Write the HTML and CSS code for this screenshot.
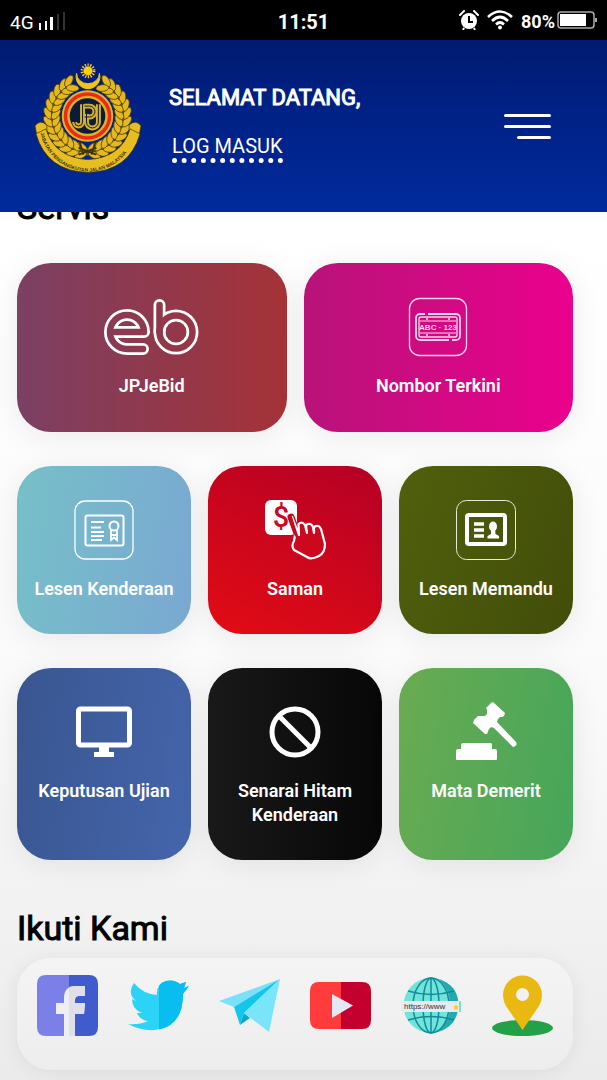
FILE: index.html
```
<!DOCTYPE html>
<html lang="ms">

<head>
    <meta charset="UTF-8">
    <meta name="viewport" content="width=device-width, initial-scale=1.0">
    <title>MyJPJ</title>
    <link rel="stylesheet" href="styles.css">
</head>

<body>
    <div class="status-bar">
        <div class="status-left">
            <span class="network">4G</span>
            <svg width="28" height="20" viewBox="0 0 28 20">
                <g fill="#fff">
                    <rect x="1" y="13" width="2" height="7" />
                    <rect x="7" y="11" width="2" height="9" />
                    <rect x="12" y="7" width="3" height="13" />
                </g>
                <g fill="#333">
                    <rect x="19" y="4" width="2" height="16" />
                    <rect x="25" y="2" width="2" height="18" />
                </g>
            </svg>
        </div>
        <div class="clock">11:51</div>
        <div class="status-right">
            <svg width="20" height="20" viewBox="0 0 20 20">
                <circle cx="10" cy="11" r="8" fill="#fff" />
                <path d="M1 5L5 1M19 5L15 1" stroke="#fff" stroke-width="2" stroke-linecap="round" />
                <path d="M10 6V12H14" fill="none" stroke="#000" stroke-width="2" />
                <path d="M5 18L4 20M15 18L16 20" stroke="#fff" stroke-width="2" />
            </svg>
            <svg width="26" height="20" viewBox="0 0 26 20">
                <g fill="none" stroke="#fff" stroke-width="2.6">
                    <path d="M1 7Q13 -4 25 7" />
                    <path d="M5 11Q13 3 21 11" />
                    <path d="M9 14.500Q13 10.500 17 14.500" />
                </g>
                <circle cx="13" cy="17.500" r="2" fill="#fff" />
            </svg>
            <span class="percent">80%</span>
            <svg class="battery" width="40" height="20" viewBox="0 0 40 20">
                <rect x="1" y="2" width="36" height="16" rx="3" fill="none" stroke="#aaa" stroke-width="1.500" />
                <rect x="3" y="4" width="26" height="12" fill="#fff" />
                <path d="M39 8V12" stroke="#aaa" stroke-width="2" />
            </svg>
        </div>
    </div>

    <header>
        <svg class="logo" viewBox="8 6 109 112" role="img" aria-label="JPJ">
            <defs>
                <g id="grain">
                    <ellipse cx="62" cy="20" rx="3.400" ry="6.500" transform="rotate(58 62 20)" />
                    <ellipse cx="62" cy="28" rx="3.400" ry="6.500" transform="rotate(122 62 28)" />
                </g>
                <g id="wreath">
                    <use href="#grain" transform="rotate(-170 62 60)" />
                    <use href="#grain" transform="rotate(-158 62 60)" />
                    <use href="#grain" transform="rotate(-146 62 60)" />
                    <use href="#grain" transform="rotate(-134 62 60)" />
                    <use href="#grain" transform="rotate(-122 62 60)" />
                    <use href="#grain" transform="rotate(-110 62 60)" />
                    <use href="#grain" transform="rotate(-98 62 60)" />
                    <use href="#grain" transform="rotate(-86 62 60)" />
                    <use href="#grain" transform="rotate(-74 62 60)" />
                    <use href="#grain" transform="rotate(-62 62 60)" />
                    <use href="#grain" transform="rotate(-50 62 60)" />
                    <use href="#grain" transform="rotate(-38 62 60)" />
                    <use href="#grain" transform="rotate(-28 62 60)" />
                </g>
                <path id="ribbonText" d="M14.500 77A49 49 0 0 0 110.500 77" />
            </defs>
            <path d="M51 17A12 12 0 1 0 74 17A10.500 9.500 0 1 1 51 17Z" fill="#f3c513" stroke="#f3c513" />
            <circle cx="62.500" cy="14.500" r="4.500" fill="#ffcf10" />
            <circle cx="62.500" cy="14.500" r="6" fill="none" stroke="#ffcf10" stroke-width="3" stroke-dasharray="1.300 1.400" />
            <path d="M46 28A36 36 0 1 0 79 28" fill="none" stroke="#6d5a14" stroke-width="8" />
            <g fill="#e6b820" stroke="#4d410c" stroke-width="0.800">
                <use href="#wreath" />
                <use href="#wreath" transform="translate(124 0) scale(-1 1)" />
            </g>
            <path d="M54 86L58 99M70 86L66 99M53 99L71 92M53 92L71 99" stroke="#3b3408" stroke-width="2" />
            <g fill="#e8bd22" stroke="#3b3408" stroke-width="0.700">
                <path d="M9 70Q14 63 21 69L21 80L11 80Z" />
                <path d="M116 70Q111 63 104 69L104 80L114 80Z" />
                <path d="M10 78L20 73Q29 102 62.500 104Q96 102 105 73L115 78Q104 116 62.500 117Q21 116 10 78Z" />
            </g>
            <text class="ribbon-text"><textPath href="#ribbonText">JABATAN PENGANGKUTAN JALAN MALAYSIA</textPath></text>
            <circle cx="62" cy="60" r="26" fill="#dfb62a" />
            <circle cx="62" cy="60" r="22" fill="none" stroke="#ed2a17" stroke-width="4" />
            <circle cx="62" cy="60" r="20" fill="none" stroke="#e8a81d" stroke-width="1" />
            <circle cx="62" cy="60" r="18" fill="#0b1c38" />
            <g fill="none" stroke="#d9b02b" stroke-width="5">
                <path d="M57 48V66A4 4 0 0 1 49 66" />
                <path d="M59 50H64A5 5 0 0 1 64 61H59" />
                <path d="M61 58V66A6 6 0 0 0 73 66V48" />
            </g>
            <g fill="none" stroke="#0b1c38" stroke-width="1">
                <path d="M57 48V66A4 4 0 0 1 49 66" />
                <path d="M59 50H64A5 5 0 0 1 64 61H59" />
                <path d="M61 58V66A6 6 0 0 0 73 66V48" />
            </g>
        </svg>
        <div class="welcome">
            <p>SELAMAT DATANG,</p>
            <a href="#">LOG MASUK</a>
        </div>
        <button class="menu-button" aria-label="Menu">
            <span></span>
            <span></span>
            <span></span>
        </button>
    </header>

    <main>
        <h2>Servis</h2>
        <div class="services">
            <a href="#" class="card wide ebid">
                <svg class="icon-eb" viewBox="105 298 94 60">
                    <mask id="ebMask" maskUnits="userSpaceOnUse" x="100" y="290" width="110" height="70">
                        <g fill="none" stroke-linecap="round">
                            <g stroke="#fff" stroke-width="12">
                                <path d="M117 333H144A17 17 0 1 0 127 350H143" stroke-linejoin="round" />
                                <path d="M159.500 306V333" />
                                <circle cx="176" cy="333" r="16.500" />
                            </g>
                            <g stroke="#000" stroke-width="6.500">
                                <path d="M115 333H144A17 17 0 1 0 127 350H143" stroke-linejoin="round" />
                                <path d="M159.500 306V333" />
                                <circle cx="176" cy="333" r="16.500" />
                            </g>
                        </g>
                    </mask>
                    <rect x="100" y="290" width="110" height="70" fill="#fff" mask="url(#ebMask)" />
                </svg>
                <span>JPJeBid</span>
            </a>
            <a href="#" class="card wide nombor">
                <svg viewBox="0 0 60 60">
                    <g fill="none" stroke="#fbd3ec">
                        <rect x="1.500" y="1.500" width="57" height="57" rx="10" stroke-width="1.300" />
                        <rect x="8" y="17" width="44" height="26" rx="4" stroke-width="1.800" />
                        <rect x="11" y="20" width="38" height="20" rx="2" stroke-width="1.300" />
                        <path d="M12 24H48M12 36H48" stroke-width="1" />
                    </g>
                    <path d="M17 17H20M41 43H44" stroke="#d30a86" stroke-width="2" />
                    <g fill="#fbd3ec">
                        <circle cx="19" cy="22" r="1" />
                        <circle cx="41" cy="22" r="1" />
                        <circle cx="19" cy="38" r="1" />
                        <circle cx="41" cy="38" r="1" />
                    </g>
                    <text class="plate-text" x="30" y="33">ABC · 123</text>
                </svg>
                <span>Nombor Terkini</span>
            </a>
            <a href="#" class="card kenderaan">
                <svg viewBox="0 0 60 60" fill="none" stroke="#fff">
                    <rect x="1" y="1" width="58" height="58" rx="10" stroke-width="1.300" />
                    <rect x="11.500" y="15.500" width="38" height="30" rx="2" stroke-width="2" />
                    <path d="M17 22H30M17 27.500H27M17 32H30M17 36H30M17 40H28" stroke-width="1.800" />
                    <circle cx="40" cy="26" r="4.500" stroke-width="2" />
                    <path d="M37 30V40L40 37.500L43 40V30M37 35H43" stroke-width="1.800" />
                </svg>
                <span>Lesen Kenderaan</span>
            </a>
            <a href="#" class="card saman">
                <svg viewBox="0 0 60 60">
                    <rect x="0" y="0" width="32" height="35" rx="6" fill="#fff" />
                    <text class="dollar" x="16" y="27">$</text>
                    <path d="M26 17L33 36" stroke="#c50a1e" stroke-width="7" stroke-linecap="round" />
                    <path d="M26 17L35 35L34 24Q37 21 40 25L42 33L41 25Q46 22 48 27L49 33L49 27Q54 24 56 29L60 44Q60 53 54 56Q46 60 42 57L29 50Q26 46 29 41L30 35Z" fill="#cb081d" />
                    <path d="M27 17L34 35L33.500 24Q37 21 40 25L42 33L41 25Q46 22 48 27L49 33L49 27Q54 24 56 29L60 44Q60 53 54 56Q46 60 42 57L29 50Q26 46 29 41L30 35" fill="none" stroke="#fff" stroke-width="2.200" stroke-linejoin="round" stroke-linecap="round" />
                    <path d="M25.500 17L31 35" stroke="#c50a1e" stroke-width="3" stroke-linecap="round" />
                </svg>
                <span>Saman</span>
            </a>
            <a href="#" class="card memandu">
                <svg viewBox="0 0 60 60">
                    <rect x="0.500" y="0.500" width="59" height="59" rx="10" fill="none" stroke="#e9ecd8" />
                    <rect x="11" y="15" width="38" height="29" rx="2" fill="none" stroke="#fff" stroke-width="4" />
                    <path d="M18 24H28M18 30H28M18 36H28" stroke="#fff" stroke-width="3.500" />
                    <ellipse cx="37" cy="26.500" rx="4" ry="5" fill="#fff" />
                    <path d="M35 28H39L39.500 34L43 36V38.500H31.500V36L35 34Z" fill="#fff" />
                </svg>
                <span>Lesen Memandu</span>
            </a>
            <a href="#" class="card keputusan">
                <svg viewBox="0 0 60 60">
                    <rect x="4.500" y="7" width="51" height="36" rx="2" fill="none" stroke="#fff" stroke-width="5" />
                    <path d="M25 44H35V50H40V55H20V50H25Z" fill="#fff" />
                </svg>
                <span>Keputusan Ujian</span>
            </a>
            <a href="#" class="card senarai">
                <svg viewBox="0 0 60 60" fill="none" stroke="#fff" stroke-width="5">
                    <circle cx="30" cy="30" r="23" />
                    <path d="M14 14L46 46" />
                </svg>
                <span>Senarai Hitam Kenderaan</span>
            </a>
            <a href="#" class="card demerit">
                <svg viewBox="0 0 60 60" fill="#fff">
                    <path d="M0 49Q0 47 2 47H5V43Q5 41 7 41H35Q36 41 36 43V47H39Q41 47 41 49V57Q41 58 40 58H1Q0 58 0 57Z" />
                    <path d="M35 1L37 0L49 11L48 14L46 15L44 15L42 17L41 20L60 40Q62 44 57 45L38 26L35 25L33 27L31 32L29 32L17 21L18 18L22 14L29 14L31 12L31 8L30 6Z" />
                </svg>
                <span>Mata Demerit</span>
            </a>
        </div>

        <h2>Ikuti Kami</h2>
        <div class="social">
            <a href="#" aria-label="Facebook">
                <svg viewBox="0 0 61 61">
                    <path d="M32 0H9Q0 0 0 9V52Q0 61 9 61H32Z" fill="#7a80e8" />
                    <path d="M32 0H52Q61 0 61 9V52Q61 61 52 61H32Z" fill="#405bcb" />
                    <path d="M27 61V39H19V28H27V23Q27 11 39 11H48V21H42Q38 21 38 25V28H48L47 39H38V61Z" fill="#efeff3" />
                    <path d="M32 12Q36 11 39 11H48V21H42Q38 21 38 25V28H48L47 39H38V61H32Z" fill="#dedfe8" />
                </svg>
            </a>
            <a href="#" aria-label="Twitter">
                <svg viewBox="0 0 61 61">
                    <defs>
                        <path id="bird" d="M61 11L56 13L58 7L52 9Q46 4 38 6Q28 9 29 20Q15 19 6 8Q0 16 5 23L8 26L4 24Q4 34 14 38H9Q12 45 20 46Q11 50 0 49Q13 56 27 55Q55 52 55 19Z" />
                        <clipPath id="birdHalf">
                            <rect x="31" y="0" width="31" height="61" />
                        </clipPath>
                    </defs>
                    <use href="#bird" fill="#2bd3f7" />
                    <use href="#bird" fill="#08bdf0" clip-path="url(#birdHalf)" />
                </svg>
            </a>
            <a href="#" aria-label="Telegram">
                <svg viewBox="0 0 61 61">
                    <path d="M0 26L61 4L15 32Z" fill="#78e2f8" />
                    <path d="M15 32L61 4L25 38L21 50Z" fill="#14c6eb" />
                    <path d="M21 50L25 38L31 43Z" fill="#08a8cf" />
                    <path d="M25 38L61 4L50 57Z" fill="#7ae4f9" />
                </svg>
            </a>
            <a href="#" aria-label="YouTube">
                <svg viewBox="0 0 61 61">
                    <path d="M31 7H9Q0 7 0 16V45Q0 54 9 54H31Z" fill="#ff3b3b" />
                    <path d="M31 7H52Q61 7 61 16V45Q61 54 52 54H31Z" fill="#c4002f" />
                    <path d="M22 19L43 30.500L22 43Z" fill="#e3e8f2" />
                </svg>
            </a>
            <a href="#" aria-label="Laman web">
                <svg viewBox="0 0 61 61">
                    <circle cx="30" cy="30.500" r="27.500" fill="#71e3da" />
                    <path d="M38 4Q58 11 57.500 31Q56 52 36 57Q50 45 49 30Q49 14 38 4Z" fill="#22aab0" />
                    <g fill="none" stroke="#118b98" stroke-width="1.500">
                        <path d="M30 3V58" />
                        <ellipse cx="30" cy="30.500" rx="8" ry="27.500" />
                        <ellipse cx="30" cy="30.500" rx="18" ry="27.500" />
                        <path d="M7 16Q30 23 53 16M7 45Q30 38 53 45" />
                    </g>
                    <rect x="0" y="26" width="59" height="11" rx="1" fill="#e5ebee" />
                    <rect x="58" y="26" width="2" height="11" fill="#71e3da" />
                    <text class="web-text" x="3" y="34">https://www</text>
                    <path d="M55 29L56 31H58L56.500 32.500L57 35L55 34L53 35L53.500 32.500L52 31H54Z" fill="#ffc93c" />
                </svg>
            </a>
            <a href="#" aria-label="Lokasi">
                <svg viewBox="0 0 61 61">
                    <ellipse cx="30.500" cy="53" rx="30.500" ry="8" fill="#24a047" />
                    <path fill-rule="evenodd" d="M30.500 55L14 31Q11 26 11 20A19 19 0 0 1 50 20Q50 26 47 31ZM30.500 13A6.500 6.500 0 1 0 30.500 26A6.500 6.500 0 1 0 30.500 13Z" fill="#e9b911" />
                </svg>
            </a>
        </div>
    </main>
</body>

</html>
```
FILE: styles.css
```
* {
    box-sizing: border-box;
}

body {
    margin: 0;
    min-height: 100vh;
    font-family: Roboto, sans-serif;
    color: #000;
    background: linear-gradient(#fff 20%, #fafafa 65%, #ebebeb);
}

a {
    color: #fff;
    text-decoration: none;
}

/* Status bar */
.status-bar {
    display: grid;
    grid-template-columns: 1fr auto 1fr;
    align-items: center;
    height: 40px;
    padding: 0 10px;
    background: #000;
    color: #fff;
    font-size: 20px;
}

.status-left,
.status-right {
    display: flex;
    align-items: center;
    gap: 4px;
}

.status-right {
    justify-content: flex-end;
    gap: 8px;
}

.network {
    font-size: 19px;
    padding-top: 4px;
}

.clock,
.percent {
    font-weight: 700;
    padding-top: 3px;
}

.percent {
    font-size: 18px;
}

.battery {
    margin-left: -6px;
}

/* Header */
header {
    position: relative;
    z-index: 1;
    display: flex;
    align-items: center;
    height: 172px;
    padding: 0 56px 0 34px;
    background: linear-gradient(#001b70, #002185 40%, #002a9c);
    color: #fff;
}

.logo {
    width: 108px;
    height: 112px;
    margin-bottom: 16px;
}

.ribbon-text {
    font: 700 5px "Liberation Sans", sans-serif;
    fill: #3b3408;
}

.welcome {
    flex: 1;
    margin: 0 0 6px 27px;
}

.welcome p {
    margin: 0 0 22px;
    font-size: 22px;
    line-height: 28px;
    -webkit-text-stroke: 1px #fff;
}

.welcome a {
    display: inline-block;
    margin-left: 3px;
    font-size: 20px;
    line-height: 24px;
    border-bottom: 5px dotted #fff;
}

.menu-button {
    display: flex;
    flex-direction: column;
    align-items: flex-end;
    gap: 8px;
    padding: 0;
    border: none;
    background: none;
    cursor: pointer;
}

.menu-button span {
    width: 47px;
    height: 3px;
    border-radius: 2px;
    background: #fff;
}

.menu-button span:last-child {
    width: 34px;
}

main {
    margin-top: -25px;
    padding: 0 34px 8px 17px;
}

h2 {
    margin: 0;
    font-size: 34px;
    font-weight: 400;
    line-height: 40px;
    -webkit-text-stroke: 1px #000;
}

.services {
    display: grid;
    grid-template-columns: repeat(6, 1fr);
    gap: 34px 17px;
    margin: 36px 0 48px;
}

.card {
    grid-column: span 2;
    display: flex;
    flex-direction: column;
    align-items: center;
    gap: 17px;
    padding: 34px 14px 33px;
    border-radius: 34px;
    box-shadow: 0 4px 30px rgba(0, 0, 0, 0.08);
    font-size: 18px;
    font-weight: 600;
    line-height: 24px;
    text-align: center;
}

.card.wide {
    grid-column: span 3;
    padding-bottom: 34px;
}

.card svg {
    width: 60px;
    height: 60px;
    overflow: visible;
}

.card svg.icon-eb {
    width: 94px;
}

.plate-text {
    font: 700 8px "Liberation Sans", sans-serif;
    fill: #fbd3ec;
    text-anchor: middle;
}

.dollar {
    font: 500 29px Roboto, sans-serif;
    fill: #cb081d;
    text-anchor: middle;
}

.ebid {
    background: linear-gradient(to right, #7b4063, #a53237);
}

.nombor {
    background: linear-gradient(to right, #b81379, #ea018d);
}

.kenderaan {
    background: linear-gradient(100deg, #76c0c8, #7aa8d2);
}

.saman {
    background: linear-gradient(25deg, #e20c14, #b50025);
}

.memandu {
    background: linear-gradient(110deg, #4f600d, #424d09);
}

.keputusan {
    background: linear-gradient(100deg, #395690, #4565ac);
}

.senarai {
    background: linear-gradient(to right, #191919, #070707);
}

.demerit {
    background: linear-gradient(100deg, #6aab52, #45a65a);
}

/* Social links */
.social {
    display: flex;
    justify-content: space-between;
    margin-top: 10px;
    padding: 17px 20px 34px;
    border-radius: 34px;
    background: linear-gradient(#f4f4f4, #ededed);
    box-shadow: 0 2px 20px rgba(0, 0, 0, 0.07);
}

.social a,
.social svg {
    display: block;
    width: 61px;
    height: 61px;
}

.web-text {
    font: 8px "Liberation Sans", sans-serif;
    fill: #333;
}
```
